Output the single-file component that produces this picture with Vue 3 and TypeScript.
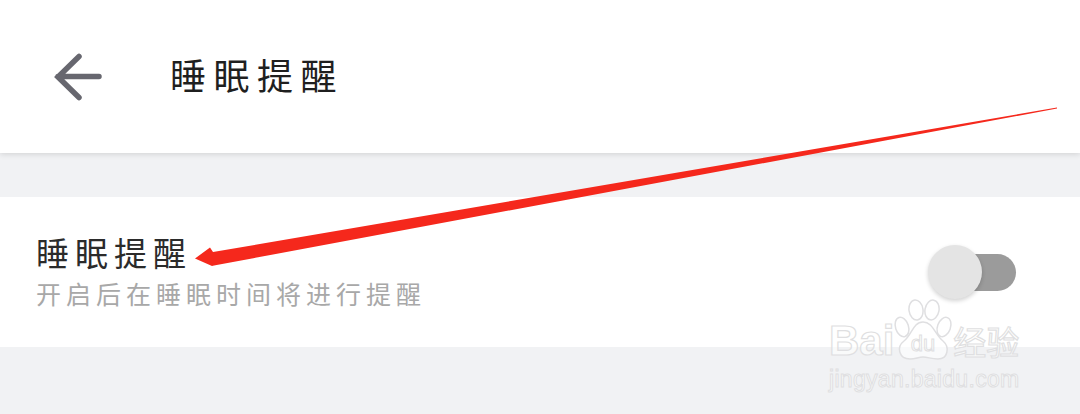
<template>
  <div class="page">
    <header class="topbar">
      <svg class="back" width="48" height="48" viewBox="0 0 48 48" aria-label="Back">
        <path d="M45 23.500H4M25 3.500L4 24 25 44.500" fill="none" stroke="#67676f" stroke-width="5.500" stroke-linecap="round" stroke-linejoin="miter" />
      </svg>
      <h1>{{ title }}</h1>
    </header>

    <section class="row">
      <div class="text">
        <div class="name">{{ title }}</div>
        <div class="desc">开启后在睡眠时间将进行提醒</div>
      </div>
      <div class="switch"><span class="knob"></span></div>
    </section>

    <svg class="arrow" width="1080" height="414" viewBox="0 0 1080 414">
      <path d="M1057 107.500L1057 108.500L214 265.500L212 266L195 258.500L210 247.500L213 252Z" fill="#f5281c" />
    </svg>

    <div class="mark">
      <div class="mark-top">
        <span class="bai">Bai</span>
        <svg class="paw" width="60" height="62" viewBox="0 0 60 62">
          <g fill="none" stroke="#dfdfe1" stroke-width="1.500">
            <ellipse cx="9" cy="28" rx="6.500" ry="10" transform="rotate(-18 9 28)" />
            <ellipse cx="23" cy="11" rx="7" ry="10" transform="rotate(-8 23 11)" />
            <ellipse cx="39" cy="11" rx="7" ry="10" transform="rotate(10 39 11)" />
            <ellipse cx="51" cy="28" rx="6.500" ry="10" transform="rotate(20 51 28)" />
            <path d="M30 23C20 23 19 36 11 42C3 48 6 60 17 60C23 60 25 58 30 58C35 58 38 60 45 60C55 60 57 48 50 42C42 36 40 23 30 23Z" fill="#fff" fill-opacity=".6" />
          </g>
          <text x="30" y="52" text-anchor="middle" class="du">du</text>
        </svg>
        <span class="cn">经验</span>
      </div>
      <div class="url">jingyan.baidu.com</div>
    </div>
  </div>
</template>

<script setup lang="ts">
const title = '睡眠提醒'
</script>

<style>
html, body {
  margin: 0;
  background: #f1f2f4;
}
</style>

<style scoped>
.page {
  position: relative;
  width: 1080px;
  height: 414px;
  overflow: hidden;
  background: #f1f2f4;
  font-family: "Noto Sans CJK SC", "Liberation Sans", sans-serif;
}

.topbar {
  display: flex;
  align-items: center;
  gap: 68px;
  height: 153px;
  padding-left: 54px;
  box-sizing: border-box;
  background: #fff;
  box-shadow: 0 1px 6px rgba(0, 0, 0, 0.14);
}

.back {
  flex: none;
}

h1 {
  margin: 0 0 6px;
  font-size: 36px;
  line-height: 46px;
  font-weight: 400;
  letter-spacing: 7.500px;
  color: #1f1f1f;
}

.row {
  display: flex;
  align-items: center;
  justify-content: space-between;
  height: 150px;
  margin-top: 44px;
  padding: 0 64px 0 36px;
  background: #fff;
}

.name {
  margin-bottom: 4px;
  font-size: 33px;
  line-height: 38px;
  letter-spacing: 6px;
  color: #2b2b2b;
}

.desc {
  margin-top: 1px;
  font-size: 25px;
  line-height: 36px;
  letter-spacing: 5px;
  color: #a8a8a8;
}

.switch {
  position: relative;
  width: 76px;
  height: 37px;
  border-radius: 19px;
  background: #9b9b9b;
}

.knob {
  position: absolute;
  left: -12px;
  top: -9px;
  width: 54px;
  height: 54px;
  border-radius: 50%;
  background: #e4e4e4;
  box-shadow: 0 2px 4px rgba(0, 0, 0, 0.18);
}

.arrow {
  position: absolute;
  left: 0;
  top: 0;
}

.mark {
  position: absolute;
  left: 829px;
  top: 299px;
  font-family: "Liberation Sans", sans-serif;
  color: rgba(255, 255, 255, 0.65);
  -webkit-text-stroke: 1.200px #dfdfe1;
}

.mark-top {
  display: flex;
  align-items: flex-end;
  height: 62px;
}

.bai {
  font-size: 42px;
  line-height: 42px;
  font-weight: 700;
  margin-bottom: -1px;
}

.paw {
  flex: none;
  margin-left: -1px;
}

.du {
  font-size: 22px;
  font-family: "Liberation Sans", sans-serif;
  fill: none;
  stroke: #dfdfe1;
  stroke-width: 1px;
  -webkit-text-stroke: 0;
}

.cn {
  font-family: "Noto Sans CJK SC", sans-serif;
  font-size: 33px;
  line-height: 42px;
  margin-bottom: -1px;
}

.url {
  margin-top: 5px;
  font-size: 23px;
  line-height: 26px;
  letter-spacing: 0.300px;
  -webkit-text-stroke-width: 1px;
}
</style>
